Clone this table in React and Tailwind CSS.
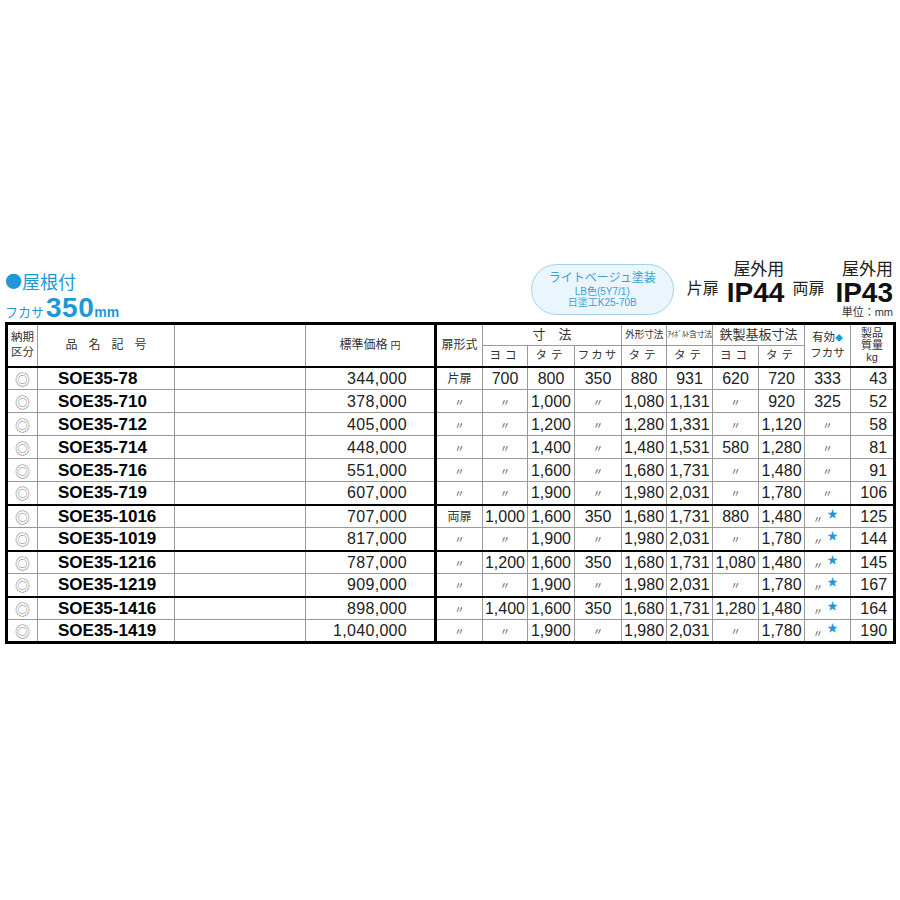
import React from 'react';

const D = '〃';
const S = '〃★';

// 品名, 価格, 扉形式, ヨコ, タテ, フカサ, 外形タテ, ｱｲﾎﾞﾙﾄタテ, 基板ヨコ, 基板タテ, 有効フカサ, 質量
const rows = [
    ['SOE35-78', '344,000', '片扉', '700', '800', '350', '880', '931', '620', '720', '333', '43'],
    ['SOE35-710', '378,000', D, D, '1,000', D, '1,080', '1,131', D, '920', '325', '52'],
    ['SOE35-712', '405,000', D, D, '1,200', D, '1,280', '1,331', D, '1,120', D, '58'],
    ['SOE35-714', '448,000', D, D, '1,400', D, '1,480', '1,531', '580', '1,280', D, '81'],
    ['SOE35-716', '551,000', D, D, '1,600', D, '1,680', '1,731', D, '1,480', D, '91'],
    ['SOE35-719', '607,000', D, D, '1,900', D, '1,980', '2,031', D, '1,780', D, '106'],
    ['SOE35-1016', '707,000', '両扉', '1,000', '1,600', '350', '1,680', '1,731', '880', '1,480', S, '125'],
    ['SOE35-1019', '817,000', D, D, '1,900', D, '1,980', '2,031', D, '1,780', S, '144'],
    ['SOE35-1216', '787,000', D, '1,200', '1,600', '350', '1,680', '1,731', '1,080', '1,480', S, '145'],
    ['SOE35-1219', '909,000', D, D, '1,900', D, '1,980', '2,031', D, '1,780', S, '167'],
    ['SOE35-1416', '898,000', D, '1,400', '1,600', '350', '1,680', '1,731', '1,280', '1,480', S, '164'],
    ['SOE35-1419', '1,040,000', D, D, '1,900', D, '1,980', '2,031', D, '1,780', S, '190'],
];

// 太線で区切るグループの先頭行
const groupStarts = [6, 8, 10];

const cell = 'border border-[#9a9a9a] p-0 whitespace-nowrap';

function Value({ v }) {
    if (v === D) {
        return <span className="text-[10px] leading-none text-[#555] relative -top-[1px]">〃</span>;
    }
    if (v === S) {
        return (
            <span className="inline-flex items-start leading-none -ml-[4px]">
                <span className="text-[10px] text-[#555] relative top-[1px]">〃</span>
                <span className="text-[11px] text-[#1e98d7] ml-[4px] relative -top-[5px]">★</span>
            </span>
        );
    }
    if (v === '片扉' || v === '両扉') {
        return <span className="text-[12px] text-[#333]">{v}</span>;
    }
    return v;
}

export default function App() {
    return (
        <div className="w-[900px] h-[900px] bg-white font-['Liberation_Sans','Noto_Sans_CJK_JP',sans-serif] text-[#222]">
            <div className="pt-[260px] pl-[5px] w-[893px]">

                {/* --- 見出し --- */}
                <div className="flex justify-between h-[62px]">
                    <div className="flex flex-col pt-[10px] text-[#1e98d7]">
                        <div className="flex items-center text-[18px] leading-[22px] font-['Noto_Sans_CJK_JP',sans-serif]">
                            <span className="text-[17px]">●</span>屋根付
                        </div>
                        <div className="flex items-baseline mt-[3px]">
                            <span className="text-[13px] font-['Noto_Sans_CJK_JP',sans-serif]">フカサ</span>
                            <span className="text-[28px] leading-[26px] font-bold ml-[2px] tracking-[0.5px]">350</span>
                            <span className="text-[14px] font-bold">mm</span>
                        </div>
                    </div>

                    <div className="flex items-start">
                        <div className="mt-[4px] w-[143px] h-[51px] rounded-full border border-[#a3d3ee] bg-[#eaf6fc] flex flex-col items-center justify-center text-[#3aa0d8]">
                            <div className="text-[12px] leading-[15px]">ライトベージュ塗装</div>
                            <div className="text-[10px] leading-[11px]">LB色(5Y7/1)</div>
                            <div className="text-[10px] leading-[11px]">日塗工K25-70B</div>
                        </div>
                        <div className="ml-[13px] mt-[19px] text-[16px] leading-[20px] text-[#222]">片扉</div>
                        <div className="ml-[8px] flex flex-col items-end">
                            <div className="text-[17px] leading-[20px] text-[#222]">屋外用</div>
                            <div className="text-[28px] leading-[26px] font-bold text-[#111]">IP44</div>
                        </div>
                        <div className="ml-[8px] mt-[19px] text-[16px] leading-[20px] text-[#222]">両扉</div>
                        <div className="ml-[11px] flex flex-col items-end">
                            <div className="text-[17px] leading-[20px] text-[#222]">屋外用</div>
                            <div className="text-[28px] leading-[26px] font-bold text-[#111]">IP43</div>
                            <div className="text-[11px] leading-[13px] text-[#333]">単位：mm</div>
                        </div>
                    </div>
                </div>

                {/* --- 表 --- */}
                <table className="border-collapse table-fixed w-[888px] border-[3px] border-black">
                    <colgroup>
                        <col className="w-[31px]" />
                        <col className="w-[137px]" />
                        <col className="w-[131px]" />
                        <col className="w-[130px]" />
                        <col className="w-[47px]" />
                        <col className="w-[45px]" />
                        <col className="w-[47px]" />
                        <col className="w-[47px]" />
                        <col className="w-[45px]" />
                        <col className="w-[46px]" />
                        <col className="w-[46px]" />
                        <col className="w-[46px]" />
                        <col className="w-[46px]" />
                        <col className="w-[44px]" />
                    </colgroup>
                    <thead className="font-normal text-[#333]">
                        <tr className="h-[22px]">
                            <th rowSpan={2} className={`${cell} border-b-2 border-b-black font-normal text-[11.5px] leading-[15px]`}>納期<br />区分</th>
                            <th rowSpan={2} className={`${cell} border-b-2 border-b-black font-normal text-[12px] tracking-[11px] pl-[11px]`}>品名記号</th>
                            <th rowSpan={2} className={`${cell} border-b-2 border-b-black`}></th>
                            <th rowSpan={2} className={`${cell} border-b-2 border-b-black border-r-[3px] border-r-black font-normal text-[12px]`}>
                                標準価格<span className="text-[10px] ml-[3px]">円</span>
                            </th>
                            <th rowSpan={2} className={`${cell} border-b-2 border-b-black font-normal text-[12px]`}>扉形式</th>
                            <th colSpan={3} className={`${cell} font-normal text-[13px] leading-[18px]`}>寸　法</th>
                            <th className={`${cell} font-normal text-[10px] leading-[18px] tracking-[-0.5px]`}>外形寸法</th>
                            <th className={`${cell} font-normal text-[8px] leading-[18px] tracking-[-0.4px]`}>ｱｲﾎﾞﾙﾄ含寸法</th>
                            <th colSpan={2} className={`${cell} font-normal text-[13px] leading-[18px]`}>鉄製基板寸法</th>
                            <th rowSpan={2} className={`${cell} border-b-2 border-b-black font-normal text-[11.5px] leading-[15px]`}>
                                有効<span className="text-[8px] text-[#1e98d7]">◆</span><br />フカサ
                            </th>
                            <th rowSpan={2} className={`${cell} border-b-2 border-b-black font-normal text-[11px] leading-[12px]`}>
                                製品<br />質量<br />kg
                            </th>
                        </tr>
                        <tr className="h-[21px]">
                            {['ヨコ', 'タテ', 'フカサ', 'タテ', 'タテ', 'ヨコ', 'タテ'].map((t, i) => (
                                <th key={i} className={`${cell} border-b-2 border-b-black font-normal text-[11.5px] leading-[17px] ${t === 'フカサ' ? 'tracking-[2px]' : 'tracking-[4px]'}`}>
                                    {t}
                                </th>
                            ))}
                        </tr>
                    </thead>
                    <tbody>
                        {rows.map((r, i) => {
                            const top = groupStarts.includes(i) ? 'border-t-2 border-t-black' : '';
                            return (
                                <tr key={r[0]} className="h-[23px] leading-[19px]">
                                    <td className={`${cell} ${top} text-center text-[15px] leading-[19px] text-[#8a8a8a] font-['Noto_Sans_CJK_JP',sans-serif]`}>◎</td>
                                    <td className={`${cell} ${top} pl-[20px] text-left text-[17px] font-bold text-black`}>{r[0]}</td>
                                    <td className={`${cell} ${top}`}></td>
                                    <td className={`${cell} ${top} border-r-[3px] border-r-black text-right pr-[27px] text-[16px] tracking-[0.3px]`}>{r[1]}</td>
                                    {r.slice(2, 11).map((v, j) => (
                                        <td key={j} className={`${cell} ${top} text-center text-[16px]`}>
                                            <Value v={v} />
                                        </td>
                                    ))}
                                    <td className={`${cell} ${top} text-right pr-[6px] text-[16px]`}>{r[11]}</td>
                                </tr>
                            );
                        })}
                    </tbody>
                </table>
            </div>
        </div>
    );
}
